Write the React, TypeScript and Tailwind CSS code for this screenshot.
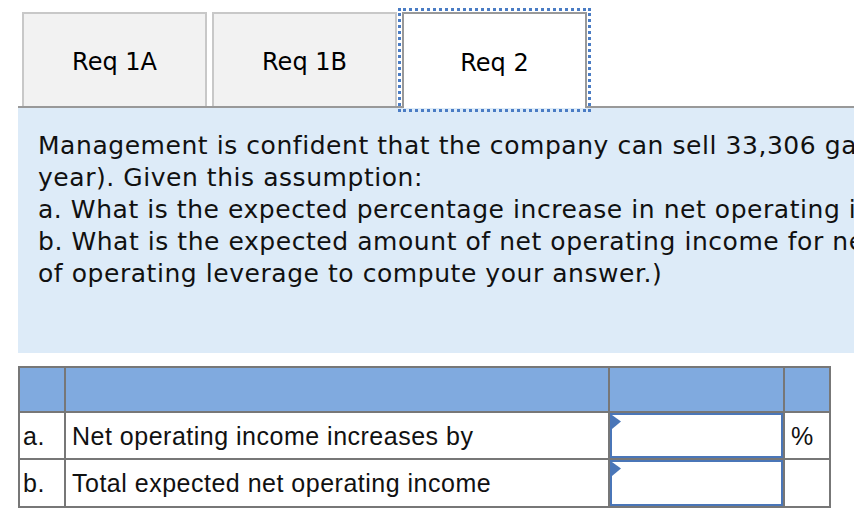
import React from 'react'

const tabs = ['Req 1A', 'Req 1B', 'Req 2']

const questionLines = [
  'Management is confident that the company can sell 33,306 gallons of ice cream next year (an increase of 3,306 gallons, or 11%, over this',
  'year). Given this assumption:',
  'a. What is the expected percentage increase in net operating income for next year?',
  'b. What is the expected amount of net operating income for next year? (Do not prepare an income statement; use the degree',
  'of operating leverage to compute your answer.)',
]

const rows = [
  { key: 'a.', label: 'Net operating income increases by', unit: '%' },
  { key: 'b.', label: 'Total expected net operating income', unit: '' },
]

function InputCell() {
  return (
    <div className="relative h-full w-full border-2 border-[#4a76b8] bg-white">
      <svg className="absolute left-0 top-0" width="10" height="15" viewBox="0 0 10 15">
        <polygon points="0,0 9,6.5 0,14" fill="#4a76b8" />
      </svg>
    </div>
  )
}

export default function App() {
  return (
    <div className="h-[526px] w-[854px] overflow-hidden bg-white pl-[18px]">
      {/* tab strip */}
      <div className="flex items-end gap-[5px] border-b-2 border-[#999] pl-[4px] pt-[12px]">
        {tabs.map((t, i) => {
          const active = i === tabs.length - 1
          return (
            <div
              key={t}
              className={
                active
                  ? 'relative z-10 -mb-[2px] flex h-[96px] w-[185px] items-center justify-center border-2 border-b-0 border-[#999] bg-white pt-[4px] text-[24px] text-black outline-[3px] outline-offset-[1px] outline-dotted outline-[#4a7cc4]'
                  : 'flex h-[94px] w-[185px] items-center justify-center border-2 border-b-0 border-[#c8c8c8] bg-[#f2f2f2] pt-[4px] text-[24px] text-black'
              }
              style={{ fontFamily: '"DejaVu Sans", Verdana, sans-serif' }}
            >
              {t}
            </div>
          )
        })}
      </div>

      {/* question panel */}
      <div
        className="h-[245px] w-[1200px] bg-[#ddebf8] pl-[20px] pt-[22px] text-[25px] leading-[32px] tracking-[0.55px] text-[#111]"
        style={{ fontFamily: '"DejaVu Sans", Verdana, sans-serif' }}
      >
        {questionLines.map((l) => (
          <div key={l} className="whitespace-nowrap">
            {l}
          </div>
        ))}
      </div>

      {/* answer table */}
      <div
        className="mt-[13px] grid w-[813px] grid-cols-[44px_542px_173px_44px] grid-rows-[43px_45px_46px] gap-[2px] bg-[#777] p-[2px] text-[25px] tracking-[0.5px] text-[#111]"
        style={{ fontFamily: '"Liberation Sans", Arial, sans-serif' }}
      >
        <div className="bg-[#80aadf]" />
        <div className="bg-[#80aadf]" />
        <div className="bg-[#80aadf]" />
        <div className="bg-[#80aadf]" />
        {rows.map((r) => (
          <React.Fragment key={r.key}>
            <div className="flex items-center bg-white pl-[3px] pt-[2px]">{r.key}</div>
            <div className="flex items-center bg-white pl-[6px] pt-[2px]">{r.label}</div>
            <div className="bg-white">
              <InputCell />
            </div>
            <div className="flex items-center bg-white pl-[6px] pt-[2px]">{r.unit}</div>
          </React.Fragment>
        ))}
      </div>
    </div>
  )
}
